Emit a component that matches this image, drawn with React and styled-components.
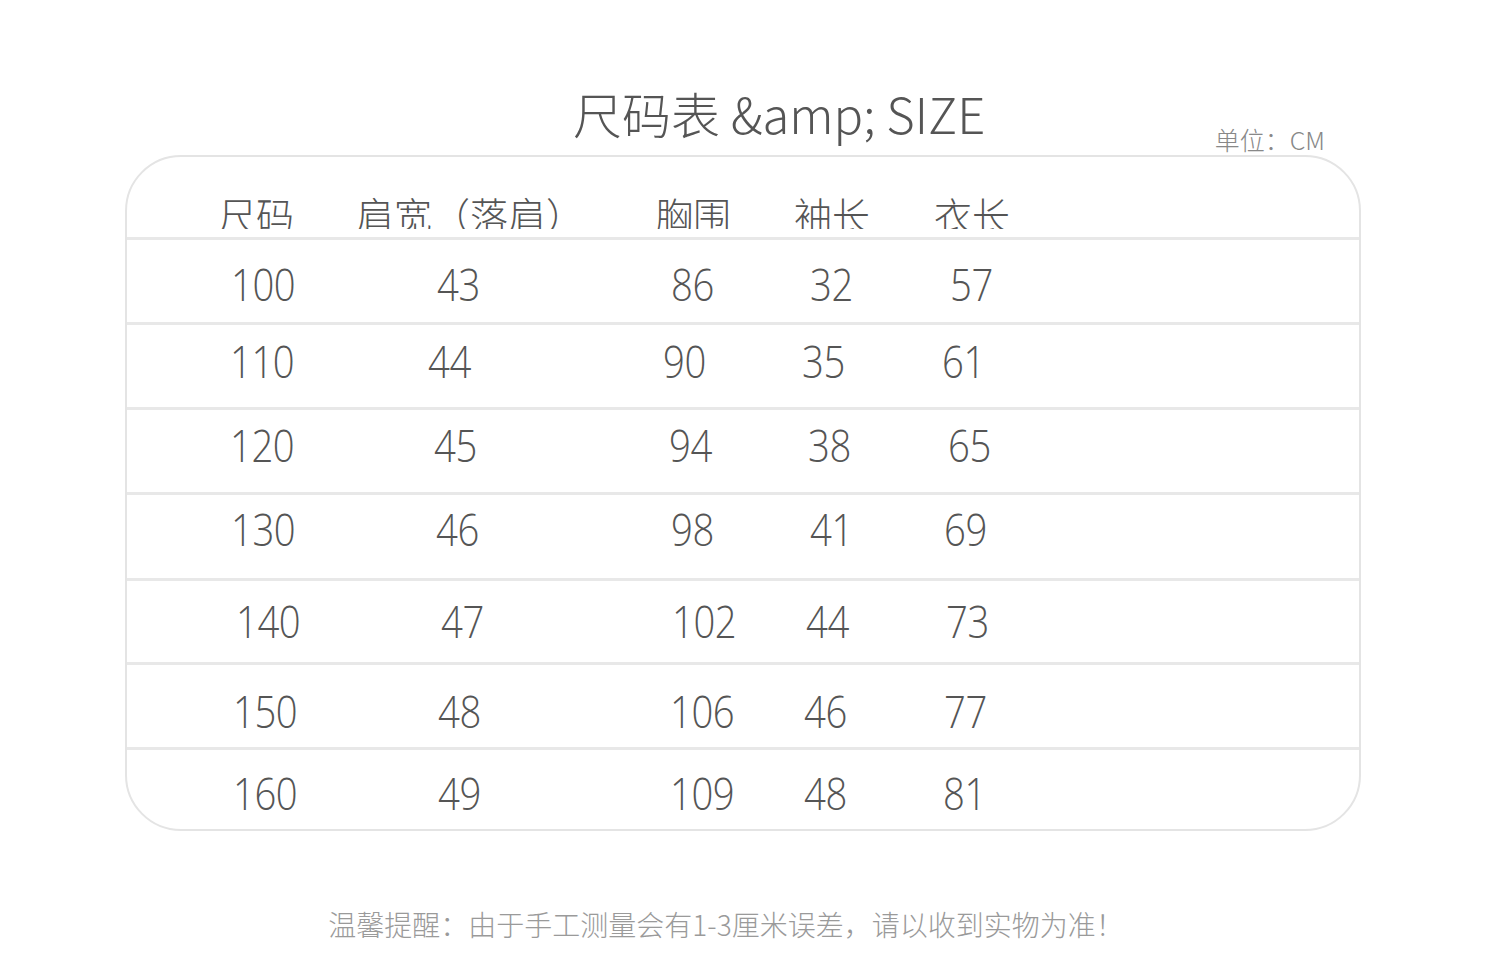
import React from "react";
import styled, { createGlobalStyle } from "styled-components";

const Global = createGlobalStyle`
  html, body { margin: 0; padding: 0; background: #fff; }
  body { font-family: "Noto Sans CJK SC", "Open Sans", sans-serif; }
`;

const CJK = `"Noto Sans CJK SC", "Open Sans", sans-serif`;
const NUM = `"Open Sans", "Noto Sans CJK SC", sans-serif`;

const Page = styled.div`
  width: 1500px;
  height: 966px;
  padding-top: 85px;
  box-sizing: border-box;
  display: flex;
  flex-direction: column;
`;

const TitleBar = styled.div`
  height: 70px;
  display: flex;
  padding: 0 175px 0 573px;
  box-sizing: border-box;
`;

const Title = styled.h1`
  margin: 0;
  font-family: ${CJK};
  font-weight: 300;
  font-size: 49px;
  line-height: 56px;
  color: #555;
  white-space: nowrap;
  align-self: flex-start;
`;

const Unit = styled.div`
  margin-left: auto;
  align-self: flex-end;
  margin-bottom: 1px;
  font-family: ${CJK};
  font-weight: 300;
  font-size: 25px;
  line-height: 30px;
  color: #888;
  white-space: nowrap;
`;

const Board = styled.div`
  margin-left: 125px;
  width: 1236px;
  height: 676px;
  box-sizing: border-box;
  border: 2px solid #e4e4e4;
  border-radius: 56px;
  overflow: hidden;
  display: flex;
  flex-direction: column;
`;

const COLS = "83px 140px 300px 140px 140px 140px 1fr";

const HeadRow = styled.div`
  height: 81px;
  display: grid;
  grid-template-columns: ${COLS};
  align-items: start;
`;

const HeadCell = styled.div`
  grid-column: ${(p) => p.$col + 1};
  margin-top: 37px;
  padding-left: ${(p) => p.$dx}px;
  height: 35px;
  overflow: hidden;
  font-family: ${CJK};
  font-weight: 300;
  font-size: 38px;
  line-height: 40px;
  color: #555;
  white-space: nowrap;
`;

const Row = styled.div`
  height: ${(p) => p.$h}px;
  box-sizing: border-box;
  border-top: 3px solid #e8e8e8;
  display: grid;
  grid-template-columns: ${COLS};
  align-items: center;
  padding-top: ${(p) => (p.$dy > 0 ? p.$dy * 2 : 0)}px;
  padding-bottom: ${(p) => (p.$dy < 0 ? -p.$dy * 2 : 0)}px;
`;

const Cell = styled.div`
  grid-column: ${(p) => p.$col + 1};
  padding-left: ${(p) => p.$dx}px;
  font-family: ${NUM};
  font-weight: 300;
  font-size: 44px;
  line-height: 50px;
  letter-spacing: -0.5px;
  color: #555;
  white-space: nowrap;
  transform: scaleX(0.87);
  transform-origin: ${(p) => p.$dx}px 50%;
`;

const Footer = styled.p`
  margin: 75px 0 0;
  padding-right: 48px;
  text-align: center;
  font-family: ${CJK};
  font-weight: 300;
  font-size: 28px;
  line-height: 36px;
  color: #9a9a9a;
  white-space: nowrap;
`;

const head = [
  ["尺码", 8],
  ["肩宽（落肩）", 6],
  ["胸围", 5],
  ["袖长", 4],
  ["衣长", 4],
];

const rows = [
  { h: 85, dy: 2.5, v: [["100", 21], ["43", 87], ["86", 21], ["32", 20], ["57", 20]] },
  { h: 86, dy: -5, v: [["110", 20], ["44", 78], ["90", 13], ["35", 12], ["61", 12]] },
  { h: 85, dy: -6, v: [["120", 20], ["45", 84], ["94", 19], ["38", 18], ["65", 18]] },
  { h: 86, dy: -7, v: [["130", 21], ["46", 86], ["98", 21], ["41", 20], ["69", 14]] },
  { h: 85, dy: 0, v: [["140", 26], ["47", 91], ["102", 22], ["44", 16], ["73", 16]] },
  { h: 86, dy: 5, v: [["150", 23], ["48", 88], ["106", 20], ["46", 14], ["77", 14]] },
  { h: 82, dy: 3, v: [["160", 23], ["49", 88], ["109", 20], ["48", 14], ["81", 13]] },
];

export default function App() {
  return (
    <>
      <Global />
      <Page>
        <TitleBar>
          <Title>尺码表 &amp;amp; SIZE</Title>
          <Unit>单位：CM</Unit>
        </TitleBar>
        <Board>
          <HeadRow>
            {head.map(([t, dx], i) => (
              <HeadCell key={t} $col={i + 1} $dx={dx}>
                {t}
              </HeadCell>
            ))}
          </HeadRow>
          {rows.map((r, ri) => (
            <Row key={ri} $h={r.h} $dy={r.dy}>
              {r.v.map(([t, dx], i) => (
                <Cell key={i} $col={i + 1} $dx={dx}>
                  {t}
                </Cell>
              ))}
            </Row>
          ))}
        </Board>
        <Footer>温馨提醒：由于手工测量会有1-3厘米误差，请以收到实物为准！</Footer>
      </Page>
    </>
  );
}
